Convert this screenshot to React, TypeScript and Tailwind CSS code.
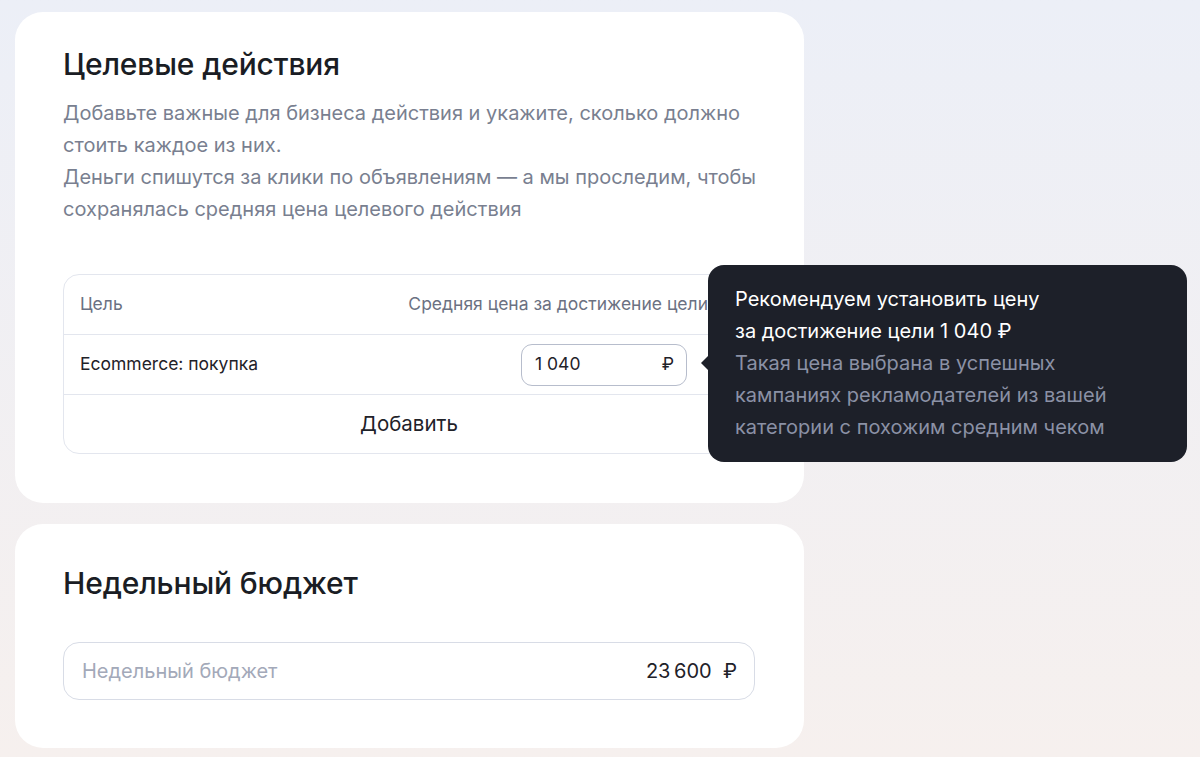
import React from "react";

export default function App() {
  return (
    <div
      className="relative w-[1200px] h-[757px] overflow-hidden bg-gradient-to-b from-[#eceff7] to-[#f6f0ee]"
      style={{ fontFamily: "Inter, 'Noto Sans', sans-serif" }}
    >
      <div className="flex flex-col gap-[21px] pt-[12px] pl-[15px]">
        {/* Card 1 */}
        <div className="w-[789px] rounded-[28px] bg-white px-[48px] pt-[34px] pb-[49px]">
          <h1 className="text-[30px] leading-[36px] font-medium text-[#1a1d24] tracking-[-0.15px]">
            Целевые действия
          </h1>
          <p className="mt-[15px] whitespace-nowrap text-[20px] leading-[32px] text-[#797f90]">
            Добавьте важные для бизнеса действия и укажите, сколько должно
            <br />
            стоить каждое из них.
            <br />
            Деньги спишутся за клики по объявлениям — а мы проследим, чтобы
            <br />
            сохранялась средняя цена целевого действия
          </p>
          <div className="mt-[49px] w-[692px] rounded-[16px] border border-[#e3e6ee]">
            <div className="flex h-[59px] items-center justify-between pl-[16px] pr-[46px] text-[17.5px] text-[#6b7182]">
              <span>Цель</span>
              <span className="whitespace-nowrap">Средняя цена за достижение цели</span>
            </div>
            <div className="flex h-[60px] items-center justify-between border-t border-[#e3e6ee] pl-[16px] pr-[67px]">
              <span className="text-[17.5px] text-[#1f2229]">Ecommerce: покупка</span>
              <div className="flex h-[42px] w-[166px] items-center justify-between rounded-[11px] border border-[#b7bdcc] pl-[13px] pr-[12px] text-[17.5px] text-[#1f2229]">
                <span>1 040</span>
                <span>₽</span>
              </div>
            </div>
            <div className="flex h-[59px] items-center justify-center border-t border-[#e3e6ee] text-[20.5px] text-[#1f2229]">
              Добавить
            </div>
          </div>
        </div>

        {/* Card 2 */}
        <div className="w-[789px] h-[224px] rounded-[28px] bg-white px-[48px] pt-[41px]">
          <h2 className="text-[30px] leading-[36px] font-medium text-[#1a1d24] tracking-[-0.15px]">
            Недельный бюджет
          </h2>
          <div className="mt-[41px] flex h-[58px] w-[692px] items-center justify-between rounded-[16px] border border-[#d8dce6] pl-[18px] pr-[17px] text-[20px]">
            <span className="text-[#a3a9b9]">Недельный бюджет</span>
            <span className="text-[#1f2229]">23&#8201;600&nbsp;&nbsp;₽</span>
          </div>
        </div>
      </div>

      {/* Tooltip */}
      <div className="absolute left-[708px] top-[265px] w-[479px] whitespace-nowrap rounded-[16px] bg-[#1d2029] pl-[27px] pt-[18px] pb-[19px] text-[20px] leading-[32px]">
        <div className="absolute left-[-7px] top-[90px] h-0 w-0 border-y-[8px] border-r-[8px] border-y-transparent border-r-[#1d2029]" />
        <div className="text-white">
          Рекомендуем установить цену
          <br />
          за достижение цели 1 040 ₽
        </div>
        <div className="text-[#8b91a5]">
          Такая цена выбрана в успешных
          <br />
          кампаниях рекламодателей из вашей
          <br />
          категории с похожим средним чеком
        </div>
      </div>
    </div>
  );
}
